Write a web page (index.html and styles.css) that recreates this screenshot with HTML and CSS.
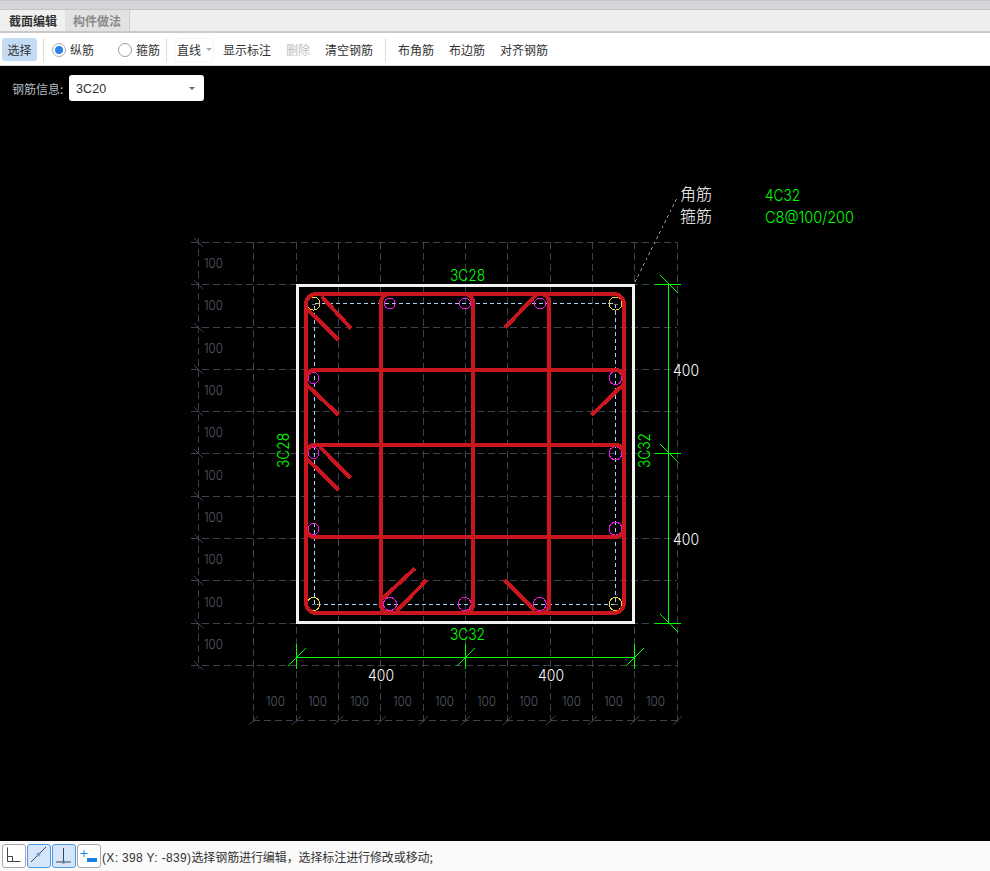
FILE: index.html
```html
<!DOCTYPE html>
<html lang="zh">
<head>
<meta charset="utf-8">
<title>截面编辑</title>
<link rel="stylesheet" href="styles.css">
</head>
<body>
<div class="app">
  <div class="strip"></div>
  <div class="tabs">
    <div class="tab active">截面编辑</div>
    <div class="tab">构件做法</div>
  </div>
  <div class="toolbar">
    <div class="btn-select">选择</div>
    <div class="divider"></div>
    <label class="radio first"><span class="radio-dot on"></span>纵筋</label>
    <label class="radio second"><span class="radio-dot"></span>箍筋</label>
    <div class="divider"></div>
    <div class="line-select">直线<span class="caret small"></span></div>
    <div class="tool t-show">显示标注</div>
    <div class="tool disabled">删除</div>
    <div class="tool">清空钢筋</div>
    <div class="divider wide"></div>
    <div class="tool t-corner">布角筋</div>
    <div class="tool">布边筋</div>
    <div class="tool">对齐钢筋</div>
  </div>
  <div class="canvas">
    <svg class="drawing" width="990" height="775" viewBox="0 66 990 775" xmlns="http://www.w3.org/2000/svg">
      <!-- grid -->
      <path class="grid" d="M191 242.500H677M191 284.500H677M191 327.500H677M191 369.500H677M191 411.500H677M191 453.500H677M191 496.500H677M191 538.500H677M191 580.500H677M191 623.500H677M191 665.500H677M253 720.500H680"/>
      <path class="grid" d="M198.500 238V669M253.500 242V725M296.500 242V725M338.500 242V725M380.500 242V725M423.500 242V725M465.500 242V725M507.500 242V725M550.500 242V725M592.500 242V725M634.500 242V725M677.500 242V725"/>
      <path class="grid-tick" d="M194 238l9 9M194 280l9 9M194 323l9 9M194 365l9 9M194 407l9 9M194 449l9 9M194 492l9 9M194 534l9 9M194 576l9 9M194 619l9 9M194 661l9 9"/>
      <path class="grid-tick" d="M249 725l9-9M292 725l9-9M334 725l9-9M377 725l9-9M419 725l9-9M461 725l9-9M503 725l9-9M546 725l9-9M588 725l9-9M630 725l9-9M673 725l9-9"/>
      <g class="t-grey">
        <text x="204" y="268" textLength="19" lengthAdjust="spacingAndGlyphs">100</text>
        <text x="204" y="310" textLength="19" lengthAdjust="spacingAndGlyphs">100</text>
        <text x="204" y="353" textLength="19" lengthAdjust="spacingAndGlyphs">100</text>
        <text x="204" y="395" textLength="19" lengthAdjust="spacingAndGlyphs">100</text>
        <text x="204" y="437" textLength="19" lengthAdjust="spacingAndGlyphs">100</text>
        <text x="204" y="480" textLength="19" lengthAdjust="spacingAndGlyphs">100</text>
        <text x="204" y="522" textLength="19" lengthAdjust="spacingAndGlyphs">100</text>
        <text x="204" y="564" textLength="19" lengthAdjust="spacingAndGlyphs">100</text>
        <text x="204" y="607" textLength="19" lengthAdjust="spacingAndGlyphs">100</text>
        <text x="204" y="649" textLength="19" lengthAdjust="spacingAndGlyphs">100</text>
        <text x="266" y="706" textLength="19" lengthAdjust="spacingAndGlyphs">100</text>
        <text x="308" y="706" textLength="19" lengthAdjust="spacingAndGlyphs">100</text>
        <text x="350" y="706" textLength="19" lengthAdjust="spacingAndGlyphs">100</text>
        <text x="393" y="706" textLength="19" lengthAdjust="spacingAndGlyphs">100</text>
        <text x="435" y="706" textLength="19" lengthAdjust="spacingAndGlyphs">100</text>
        <text x="477" y="706" textLength="19" lengthAdjust="spacingAndGlyphs">100</text>
        <text x="519" y="706" textLength="19" lengthAdjust="spacingAndGlyphs">100</text>
        <text x="562" y="706" textLength="19" lengthAdjust="spacingAndGlyphs">100</text>
        <text x="604" y="706" textLength="19" lengthAdjust="spacingAndGlyphs">100</text>
        <text x="646" y="706" textLength="19" lengthAdjust="spacingAndGlyphs">100</text>
      </g>
      <!-- leader -->
      <path class="leader" d="M635 282L678 196"/>
      <!-- section outline -->
      <rect class="section" x="297.500" y="285.500" width="336" height="337"/>
      <rect class="cover" x="314.500" y="303.500" width="301" height="300.500"/>
      <!-- bars -->
      <g class="bar-marks">
        <path d="M312 304.500h4M614 304.500h4M312 604.500h4M614 604.500h4"/>
      </g>
      <g class="bars-corner">
        <circle cx="313.500" cy="303.500" r="6.500"/>
        <circle cx="615.500" cy="303.500" r="6.500"/>
        <circle cx="313.500" cy="604" r="6.500"/>
        <circle cx="615.500" cy="604" r="6.500"/>
      </g>
      <g class="bars-side">
        <circle cx="389.700" cy="303.500" r="5.500"/>
        <circle cx="465" cy="303.500" r="5.500"/>
        <circle cx="540" cy="303.500" r="5.500"/>
        <circle cx="313.500" cy="378" r="5.500"/>
        <circle cx="313.500" cy="453" r="5.500"/>
        <circle cx="313.500" cy="529" r="5.500"/>
        <circle cx="615.500" cy="378" r="6.500"/>
        <circle cx="615.500" cy="453.300" r="6.500"/>
        <circle cx="615.500" cy="528.700" r="6.500"/>
        <circle cx="390" cy="604" r="6.500"/>
        <circle cx="464.700" cy="604" r="6.500"/>
        <circle cx="539.700" cy="604" r="6.500"/>
      </g>
      <!-- stirrups -->
      <g class="stirrup">
        <rect x="306" y="294" width="318" height="319" rx="10"/>
        <path d="M389 294A8 8 0 0 0 381 302V604A8 8 0 0 0 389 613"/>
        <path d="M465 294A8 8 0 0 1 473 302V604A8 8 0 0 1 465 613"/>
        <path d="M541 294A8 8 0 0 1 549 302V604A8 8 0 0 1 541 613"/>
        <path d="M306 378A8 8 0 0 1 314 370H616A8 8 0 0 1 624 378"/>
        <path d="M306 453A8 8 0 0 1 314 445H616A8 8 0 0 1 624 453"/>
        <path d="M306 529A8 8 0 0 0 314 537H616A8 8 0 0 0 624 529"/>
        <path d="M321.700 296.700L351 328.300M307 309L338.700 340M307 385L338.700 415M320 447L350.500 478M307 459L338.700 490"/>
        <path d="M536 295L505 327.700M624 384L591.700 415M381 600L415 568.300M396.700 611L426.700 580M504.300 580L535 610.700"/>
      </g>
      <!-- dimensions -->
      <path class="dim" d="M668.500 284V623M655 284.500H681M655 453.500H681M655 623.500H681M660 275l18 18M660 444l18 18M660 614l18 18"/>
      <path class="dim" d="M297 657.500H634M296.500 644V669M465.500 644V669M634.500 644V669M288 666l18-18M457 666l18-18M626 666l18-18"/>
      <g class="t-green">
        <text x="450" y="281" textLength="35" lengthAdjust="spacingAndGlyphs">3C28</text>
        <text x="450" y="640" textLength="35" lengthAdjust="spacingAndGlyphs">3C32</text>
        <text transform="translate(289 468) rotate(-90)" textLength="35" lengthAdjust="spacingAndGlyphs">3C28</text>
        <text transform="translate(650 468) rotate(-90)" textLength="35" lengthAdjust="spacingAndGlyphs">3C32</text>
        <text x="765" y="201" textLength="35" lengthAdjust="spacingAndGlyphs">4C32</text>
        <text x="765" y="223" textLength="89" lengthAdjust="spacingAndGlyphs">C8@100/200</text>
      </g>
      <g class="t-white">
        <text x="673" y="376" textLength="26" lengthAdjust="spacingAndGlyphs">400</text>
        <text x="673" y="545" textLength="26" lengthAdjust="spacingAndGlyphs">400</text>
        <text x="368" y="681" textLength="26" lengthAdjust="spacingAndGlyphs">400</text>
        <text x="538" y="681" textLength="26" lengthAdjust="spacingAndGlyphs">400</text>
      </g>
      <g class="t-legend">
        <text x="680" y="200">角筋</text>
        <text x="680" y="222">箍筋</text>
      </g>
    </svg>
    <div class="info-row">
      <span class="info-label">钢筋信息:</span>
      <div class="info-select">3C20<span class="caret"></span></div>
    </div>
  </div>
  <div class="status">
    <div class="icon-btn">
      <svg width="22" height="22" viewBox="0 0 22 22"><path class="ic" d="M4.500 2.500V16.500H17.500M4.500 11.500H9.500V16.500"/></svg>
    </div>
    <div class="icon-btn on">
      <svg width="22" height="22" viewBox="0 0 22 22"><path class="ic" d="M3 17L18 2"/><circle class="ic-c" cx="10.500" cy="9.500" r="1.500"/></svg>
    </div>
    <div class="icon-btn on">
      <svg width="22" height="22" viewBox="0 0 22 22"><path class="ic" d="M10.500 3V17M3 17H18"/><circle class="ic-c" cx="10.500" cy="17" r="1.500"/></svg>
    </div>
    <div class="icon-btn">
      <svg width="22" height="22" viewBox="0 0 22 22"><path class="ic-b" d="M6 5V12M2.500 8.500H9.500"/><rect class="ic-r" x="9" y="13" width="10" height="4"/></svg>
    </div>
    <span class="status-text"><span class="coords">(X: 398 Y: -839)</span>选择钢筋进行编辑，选择标注进行修改或移动;</span>
  </div>
</div>
</body>
</html>
```
FILE: styles.css
```css
* { box-sizing: border-box; }
html, body { margin: 0; padding: 0; }
body {
  background: #000;
  font-family: "Noto Sans CJK SC", "Liberation Sans", sans-serif;
  font-size: 12px;
  color: #333;
  overflow: hidden;
}
.app { width: 990px; height: 871px; display: flex; flex-direction: column; }

.strip { height: 10px; background: #d5d6db; border-top: 1px solid #c5c6cc; border-bottom: 1px solid #c3c4c8; }

.tabs { height: 23px; display: flex; padding-left: 1px; background: #eeeeee; border-bottom: 2px solid #c9c9c9; }
.tab { width: 65px; line-height: 21px; text-align: center; font-weight: 700; color: #8a8a8a; background: #e2e2e2; border-right: 1px solid #d0d0d0; }
.tab.active { width: 64px; color: #333; background: #f0f0f0; border-right: 0; }

.toolbar { height: 33px; display: flex; align-items: center; padding: 1px 0 0 2px; background: #fff; border-bottom: 1px solid #d8d8d8; }
.btn-select { width: 35px; height: 23px; line-height: 23px; text-align: center; border-radius: 3px; background: #c3dcf3; }
.divider { width: 1px; height: 24px; margin-left: 6px; background: #dcdcdc; }
.divider.wide { margin-left: 12px; }
.radio { display: flex; align-items: center; gap: 4px; }
.radio.first { margin-left: 8px; }
.radio.second { margin-left: 24px; }
.radio-dot { width: 14px; height: 14px; border: 1px solid #9a9a9a; border-radius: 50%; display: flex; align-items: center; justify-content: center; background: #fff; }
.radio-dot.on { border-color: #aaa; }
.radio-dot.on::after { content: ""; width: 8px; height: 8px; border-radius: 50%; background: #2a83e8; }
.line-select { width: 40px; height: 24px; margin-left: 7px; padding-left: 2px; display: flex; align-items: center; gap: 5px; border: 1px solid #f4f4f4; border-radius: 4px; font-size: 12px; }
.tool { margin-left: 15px; white-space: nowrap; }
.tool.t-show { margin-left: 9px; }
.tool.t-corner { margin-left: 12px; }
.tool.disabled { color: #bdbdbd; }
.caret { width: 0; height: 0; border-left: 3px solid transparent; border-right: 3px solid transparent; border-top: 3px solid #666; }
.caret.small { border-top-color: #aaa; }

.canvas { flex: 1; position: relative; background: #000; padding: 9px 0 0 12px; }
.drawing { position: absolute; left: 0; top: 0; display: block; shape-rendering: crispEdges; }
.info-row { position: relative; display: flex; align-items: center; gap: 5px; }
.info-label { color: #b4bcc4; width: 52px; white-space: nowrap; }
.info-select { width: 135px; height: 26px; padding: 1px 9px 0 7px; display: flex; align-items: center; justify-content: space-between; background: #fff; border-radius: 3px; letter-spacing: .1px; font-family: "Liberation Sans", sans-serif; font-size: 12.500px; }

.grid { fill: none; stroke: #3b414d; stroke-width: 1; stroke-dasharray: 7 4; }
.grid-tick { fill: none; stroke: #3b414d; stroke-width: 1; }
.leader { fill: none; stroke: #8a8a8a; stroke-width: 1; stroke-dasharray: 3 3; }
.section { fill: none; stroke: #f2f2f2; stroke-width: 3; }
.cover { fill: none; stroke: #a9d2f2; stroke-width: 1; stroke-dasharray: 4 3; }
.bars-corner circle { fill: none; stroke: #f0d838; stroke-width: 1; }
.bars-side circle { fill: none; stroke: #f018e8; stroke-width: 1; }
.bar-marks path { fill: none; stroke: #777; stroke-width: 1; }
.stirrup rect, .stirrup path { fill: none; stroke: #c9161f; stroke-width: 4; }
.dim { fill: none; stroke: #00ff00; stroke-width: 1; }
.t-grey text { font-family: "Inter", sans-serif; font-weight: 300; font-size: 13px; fill: #565c68; }
.t-green text { font-family: "Inter", sans-serif; font-weight: 300; font-size: 16.500px; fill: #00ff00; }
.t-white text { font-family: "Inter", sans-serif; font-weight: 300; font-size: 16.500px; fill: #fff; }
.t-legend text { font-family: "Noto Sans CJK SC", sans-serif; font-weight: 300; font-size: 16px; fill: #fff; }

.status { height: 30px; display: flex; align-items: center; gap: 1px; padding-left: 2px; background: #fafafa; }
.icon-btn { width: 24px; height: 24px; border: 1px solid #a8a8a8; border-radius: 3px; background: #fff; }
.icon-btn.on { background: #d5e5fa; border-color: #4d9be8; }
.icon-btn svg { display: block; }
.ic { fill: none; stroke: #444; stroke-width: 1; }
.ic-c { fill: none; stroke: #5a8fd0; stroke-width: 1; }
.ic-b { fill: none; stroke: #1a80e5; stroke-width: 1; }
.ic-r { fill: #1a80e5; }
.status-text { white-space: nowrap; letter-spacing: -.1px; }
.coords { font-family: "Liberation Sans", sans-serif; letter-spacing: .35px; }
```
